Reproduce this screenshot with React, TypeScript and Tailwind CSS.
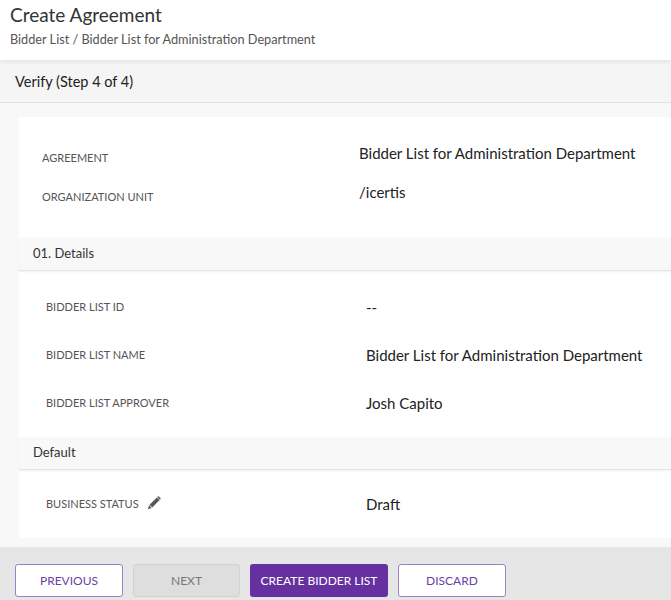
import React from "react";

const Pencil = () => (
  <svg width="14" height="14" viewBox="0 0 16 16" className="ml-[8px] -mt-[2px]">
    <path d="M11.3 1.6 14.4 4.7 6 13.1 2.9 10z" fill="#555" />
    <path d="M2.3 10.7 5.3 13.7 1 15z" fill="#555" />
    <path d="M12.2 0.7a1 1 0 0 1 1.4 0l1.7 1.7a1 1 0 0 1 0 1.4l-0.5 0.5-3.1-3.1z" fill="#555" />
  </svg>
);

const Row = ({ label, value, icon }: { label: string; value: string; icon?: boolean }) => (
  <div className="flex items-center h-[48px]">
    <div className="w-[347px] pl-[27px] flex items-center text-[11px] text-[#555] uppercase">
      {label}
      {icon && <Pencil />}
    </div>
    <div className="text-[15px] text-[#222]">{value}</div>
  </div>
);

const SectionHeader = ({ title }: { title: string }) => (
  <div className="h-[33px] bg-[#f8f8f8] border-b border-[#e4e4e4] shadow-[0_1px_2px_rgba(0,0,0,0.06)] flex items-center pl-[14px] text-[13px] text-[#333]">
    {title}
  </div>
);

export default function App() {
  return (
    <div
      className="w-full h-[600px] overflow-hidden flex flex-col bg-[#f8f8f8]"
      style={{ fontFamily: "Lato, 'Open Sans', sans-serif" }}
    >
      <div className="h-[60px] bg-white shadow-[0_2px_4px_rgba(0,0,0,0.08)] pl-[10px] pt-[2px] relative z-10 shrink-0">
        <div className="text-[19px] text-[#333] leading-[25px]">Create Agreement</div>
        <div className="text-[12.7px] text-[#555] mt-[4px] leading-[16px]">
          Bidder List / Bidder List for Administration Department
        </div>
      </div>
      <div className="h-[42px] mt-[1px] bg-[#f5f5f5] border-b border-[#e2e2e2] flex items-center pl-[15px] text-[14.5px] text-[#222] shrink-0">
        Verify (Step 4 of 4)
      </div>
      <div className="flex-1 pt-[14px] pl-[19px]">
        <div className="bg-white">
          <div className="h-[121px] pt-[16px]">
            <div className="flex items-center h-[40px]">
              <div className="w-[340px] pl-[23px] text-[11px] text-[#555] uppercase pt-[10px]">Agreement</div>
              <div className="text-[15px] text-[#222]">Bidder List for Administration Department</div>
            </div>
            <div className="flex items-center h-[38px]">
              <div className="w-[340px] pl-[23px] text-[11px] text-[#555] uppercase pt-[10px]">Organization Unit</div>
              <div className="text-[15px] text-[#222]">/icertis</div>
            </div>
          </div>
          <SectionHeader title="01. Details" />
          <div className="pt-[12px] pb-[10px]">
            <Row label="Bidder List ID" value="--" />
            <Row label="Bidder List Name" value="Bidder List for Administration Department" />
            <Row label="Bidder List Approver" value="Josh Capito" />
          </div>
          <SectionHeader title="Default" />
          <div className="h-[68px] flex items-center">
            <div className="w-full">
              <Row label="Business Status" value="Draft" icon />
            </div>
          </div>
        </div>
      </div>
      <div className="h-[53px] bg-[#e6e6e6] flex items-start pt-[17px] pl-[15px] gap-[10px] shrink-0">
        <button className="w-[108px] h-[33px] bg-white border border-[#9b7fc9] rounded-[3px] text-[12px] text-[#6a3fa8] uppercase">
          Previous
        </button>
        <button className="w-[107px] h-[33px] bg-[#dedede] border border-[#d2d2d2] rounded-[3px] text-[12px] text-[#777] uppercase">
          Next
        </button>
        <button className="w-[138px] h-[33px] bg-[#6630a0] rounded-[3px] text-[12px] text-white uppercase">
          Create Bidder List
        </button>
        <button className="w-[108px] h-[33px] bg-white border border-[#9b7fc9] rounded-[3px] text-[12px] text-[#6a3fa8] uppercase">
          Discard
        </button>
      </div>
    </div>
  );
}
